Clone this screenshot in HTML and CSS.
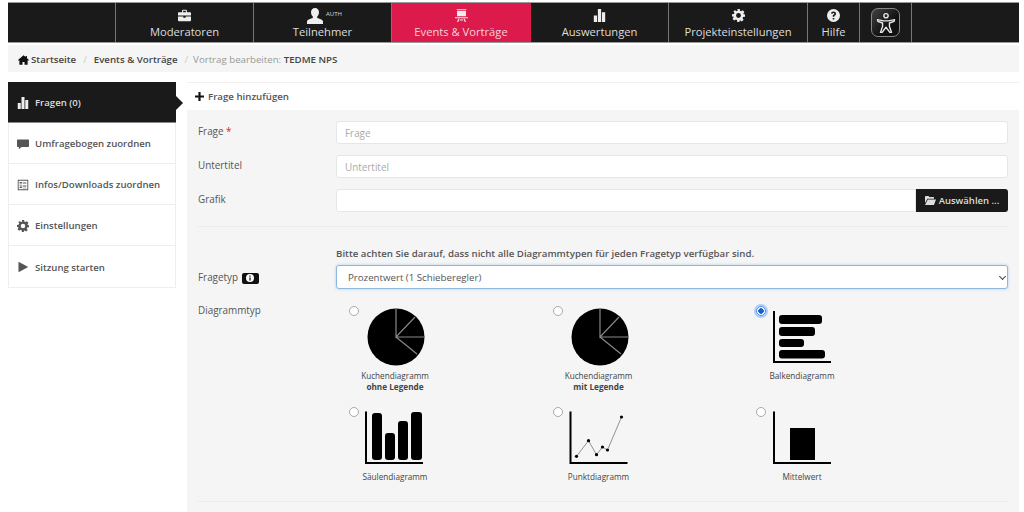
FILE: index.html
```html
<!DOCTYPE html>
<html lang="de">
<head>
    <meta charset="UTF-8">
    <title>Vortrag bearbeiten: TEDME NPS</title>
    <link rel="stylesheet" href="styles.css">
</head>
<body>
    <svg class="defs" width="0" height="0">
        <symbol id="i-bars" viewBox="0 0 16 16"><path d="M1 8h4v8H1zM6 0h4v16H6zM11 4h4v12h-4z"/></symbol>
        <symbol id="i-cog" viewBox="0 0 16 16"><path fill-rule="evenodd" d="M6.5 0h3l.4 2.2 1.4.6L13.200 1.500l2.100 2.100-1.300 1.900.6 1.400L16 6.500v3l-2.400.4-.6 1.400 1.300 1.900-2.100 2.100-1.900-1.300-1.400.6L9.500 16h-3l-.4-2.400-1.400-.6-1.900 1.300-2.100-2.100 1.300-1.900-.6-1.400L0 9.500v-3l2.400-.4.600-1.400L1.700 2.800 3.800 1.500l1.900 1.300 1.400-.6zM8 5a3 3 0 1 0 0 6 3 3 0 0 0 0-6z"/></symbol>
    </svg>

    <div class="topnav">
        <div class="nav-item nav-blank"></div>
        <a class="nav-item nav-w138">
            <svg class="nav-icon" viewBox="0 0 16 14"><path d="M5 3V1.500C5 .7 5.700 0 6.500 0h3C10.300 0 11 .7 11 1.500V3h4c.6 0 1 .4 1 1v3H0V4c0-.6.4-1 1-1zm1.300 0h3.400V1.300H6.300zM0 8.300h6.500v1.400h3V8.300H16V13c0 .6-.4 1-1 1H1c-.6 0-1-.4-1-1z"/></svg>
            <span>Moderatoren</span>
        </a>
        <a class="nav-item nav-w138">
            <div class="nav-user">
                <svg class="nav-icon nav-icon-lg" viewBox="0 0 16 16"><path d="M8 0c2.400 0 4 1.900 4 4.300 0 1.700-.8 3.300-1.800 4.300v1.500c2 .8 5.800 1.500 5.800 3.400V16H0v-2.500c0-1.900 3.800-2.600 5.800-3.400V8.600C4.800 7.600 4 6 4 4.300 4 1.900 5.600 0 8 0z"/></svg>
                <small>AUTH</small>
            </div>
            <span>Teilnehmer</span>
        </a>
        <a class="nav-item nav-w139 active">
            <svg class="nav-icon" viewBox="0 0 16 16"><path d="M2 0h12v1H2zM2.500 2h11v7h-11zM0 10h16v1.500H0zM4 12h1.500L4 16H2.500zM10.500 12H12l1.500 4H12zM6 13h4v1H6z"/></svg>
            <span>Events &amp; Vorträge</span>
        </a>
        <a class="nav-item nav-w138">
            <svg class="nav-icon" viewBox="0 0 16 16"><use href="#i-bars"/></svg>
            <span>Auswertungen</span>
        </a>
        <a class="nav-item nav-w139">
            <svg class="nav-icon" viewBox="0 0 16 16"><use href="#i-cog"/></svg>
            <span>Projekteinstellungen</span>
        </a>
        <a class="nav-item nav-w52">
            <svg class="nav-icon" viewBox="0 0 16 16"><path fill-rule="evenodd" d="M8 0a8 8 0 1 1 0 16A8 8 0 0 1 8 0zM7 11v2h2v-2zM8 3C6.200 3 5 4 4.900 5.600l1.900.3C6.900 5.200 7.300 4.800 8 4.800c.7 0 1.100.4 1.100.9 0 .5-.3.800-.9 1.200-.9.600-1.200 1.200-1.200 2.100v.5h2v-.3c0-.5.200-.7.800-1.100.9-.6 1.300-1.300 1.300-2.400C11.100 4 9.800 3 8 3z"/></svg>
            <span>Hilfe</span>
        </a>
        <div class="nav-item nav-w52">
            <div class="access-btn">
                <svg viewBox="0 0 28 28" width="24" height="24" fill="none" stroke="#e8e8e8" stroke-width="1.600" stroke-linejoin="round">
                    <circle cx="14" cy="5.500" r="2.500"/>
                    <path d="M4 10l7 1.500h6l7-1.500-.5 2-5.500 2v4l2.500 7h-2L14 19l-4.500 6h-2L10 18v-4l-5.500-2z"/>
                </svg>
            </div>
        </div>
        <div class="nav-item nav-rest"></div>
    </div>

    <div class="breadcrumb">
        <svg class="home-icon" viewBox="0 0 16 14"><path d="M8 0l3 2.600V1h2v3.400L16 7l-1 1.200-1-.8V14H9.500v-4h-3v4H2V7.400l-1 .8L0 7z"/></svg>
        <a class="crumb">Startseite</a>
        <span class="crumb-sep">/</span>
        <a class="crumb">Events &amp; Vorträge</a>
        <span class="crumb-sep">/</span>
        <span class="crumb-current">Vortrag bearbeiten: <b>TEDME NPS</b></span>
    </div>

    <div class="content">
        <div class="sidebar">
            <a class="side-item active">
                <svg class="side-icon" viewBox="0 0 16 16"><use href="#i-bars"/></svg>
                Fragen (0)
            </a>
            <a class="side-item">
                <svg class="side-icon" viewBox="0 0 16 16"><path d="M1 2h14c.6 0 1 .4 1 1v8c0 .6-.4 1-1 1H6l-3.500 3v-3H1c-.6 0-1-.4-1-1V3c0-.6.4-1 1-1z"/></svg>
                Umfragebogen zuordnen
            </a>
            <a class="side-item">
                <svg class="side-icon" viewBox="0 0 16 16"><path fill-rule="evenodd" d="M1 1h14v14H1zM2.200 2.200v11.600h11.600V2.200zM3.500 4h3v2h-3zM7.500 4h5v.8h-5zM7.500 6h5v.8h-5zM3.500 7.500h3v1h-3zM7.500 8h5v.8h-5zM3.500 10h3v2h-3zM7.500 10h5v.8h-5zM7.500 11.600h5v.8h-5z"/></svg>
                Infos/Downloads zuordnen
            </a>
            <a class="side-item">
                <svg class="side-icon" viewBox="0 0 16 16"><use href="#i-cog"/></svg>
                Einstellungen
            </a>
            <a class="side-item">
                <svg class="side-icon" viewBox="0 0 16 16"><path d="M2 1l13 7-13 7z"/></svg>
                Sitzung starten
            </a>
        </div>

        <div class="panel">
            <div class="panel-head">
                <svg class="plus-icon" viewBox="0 0 10 10"><path d="M3.800 0h2.400v3.800H10v2.400H6.200V10H3.800V6.200H0V3.800h3.800z"/></svg>
                Frage hinzufügen
            </div>
            <div class="panel-body">
                <div class="form-row">
                    <label class="form-label">Frage <i class="req">*</i></label>
                    <input class="form-input" type="text" placeholder="Frage">
                </div>
                <div class="form-row">
                    <label class="form-label">Untertitel</label>
                    <input class="form-input" type="text" placeholder="Untertitel">
                </div>
                <div class="form-row">
                    <label class="form-label">Grafik</label>
                    <div class="file-group">
                        <input class="form-input" type="text">
                        <button class="file-btn">
                            <svg class="folder-icon" viewBox="0 0 16 13"><path d="M1 0h4l1.500 1.500H13V4H3.500L0 10V1c0-.6.4-1 1-1zM4 5h12l-3 8H0z"/></svg>
                            Auswählen ...
                        </button>
                    </div>
                </div>
                <hr class="divider">
                <p class="hint">Bitte achten Sie darauf, dass nicht alle Diagrammtypen für jeden Fragetyp verfügbar sind.</p>
                <div class="form-row type-row">
                    <label class="form-label">Fragetyp
                        <span class="info-badge"><svg viewBox="0 0 10 10" width="8" height="8"><path fill-rule="evenodd" fill="#fff" d="M5 0a5 5 0 1 1 0 10A5 5 0 0 1 5 0zM4.200 2v1.500h1.600V2zM4.200 4.500V8h1.600V4.500z"/></svg></span>
                    </label>
                    <div class="select-wrap">
                        <select class="form-select">
                            <option>Prozentwert (1 Schieberegler)</option>
                        </select>
                    </div>
                </div>
                <div class="form-row chart-row">
                    <label class="form-label chart-label">Diagrammtyp</label>
                    <div class="chart-grid">
                        <label class="chart-opt">
                            <input type="radio" name="chart">
                            <div class="chart-fig">
                                <svg viewBox="0 0 68 58" width="68" height="58">
                                    <circle cx="35" cy="29" r="28.500"/>
                                    <path class="pie-cut" d="M35 .5V29l19-20M35 29h28.500M35 29l21 17"/>
                                </svg>
                                <div>Kuchendiagramm<br><b>ohne Legende</b></div>
                            </div>
                        </label>
                        <label class="chart-opt">
                            <input type="radio" name="chart">
                            <div class="chart-fig">
                                <svg viewBox="0 0 68 58" width="68" height="58">
                                    <circle cx="35" cy="29" r="28.500"/>
                                    <path class="pie-cut" d="M35 .5V29l19-20M35 29h28.500M35 29l21 17"/>
                                </svg>
                                <div>Kuchendiagramm<br><b>mit Legende</b></div>
                            </div>
                        </label>
                        <label class="chart-opt">
                            <input type="radio" name="chart" checked>
                            <div class="chart-fig">
                                <svg viewBox="0 0 68 58" width="68" height="58">
                                    <path class="axis" d="M6 3v51h57"/>
                                    <rect x="11" y="7" width="43" height="9" rx="3"/>
                                    <rect x="11" y="19" width="36" height="9" rx="3"/>
                                    <rect x="11" y="31" width="25" height="8" rx="3"/>
                                    <rect x="11" y="42" width="46" height="8.500" rx="3"/>
                                </svg>
                                <div>Balkendiagramm</div>
                            </div>
                        </label>
                        <label class="chart-opt">
                            <input type="radio" name="chart">
                            <div class="chart-fig">
                                <svg viewBox="0 0 68 58" width="68" height="58">
                                    <path class="axis" d="M5 2.500V54h57"/>
                                    <rect x="11" y="4" width="10" height="47" rx="3"/>
                                    <rect x="24" y="24" width="10" height="27" rx="3"/>
                                    <rect x="37" y="12" width="10" height="39" rx="3"/>
                                    <rect x="50" y="3" width="11" height="48" rx="3"/>
                                </svg>
                                <div>Säulendiagramm</div>
                            </div>
                        </label>
                        <label class="chart-opt">
                            <input type="radio" name="chart">
                            <div class="chart-fig">
                                <svg viewBox="0 0 68 58" width="68" height="58">
                                    <path class="axis" d="M5.500 2.500V54h57"/>
                                    <path class="dot-line" d="M11.500 47.300l12-15.600 8 14 6-7.700 5 3 14-33"/>
                                    <circle cx="11.500" cy="47.300" r="1.600"/>
                                    <circle cx="23.500" cy="31.700" r="1.600"/>
                                    <circle cx="31.500" cy="45.700" r="1.600"/>
                                    <circle cx="37.500" cy="38" r="1.600"/>
                                    <circle cx="42.500" cy="41" r="1.600"/>
                                    <circle cx="56.500" cy="8" r="1.600"/>
                                </svg>
                                <div>Punktdiagramm</div>
                            </div>
                        </label>
                        <label class="chart-opt">
                            <input type="radio" name="chart">
                            <div class="chart-fig">
                                <svg viewBox="0 0 68 58" width="68" height="58">
                                    <path class="axis" d="M6 2.500V54h57"/>
                                    <rect x="22" y="19" width="25" height="32"/>
                                </svg>
                                <div>Mittelwert</div>
                            </div>
                        </label>
                    </div>
                </div>
                <hr class="divider divider-end">
            </div>
        </div>
    </div>
</body>
</html>
```

FILE: styles.css
```css
* {
    margin: 0;
    padding: 0;
    box-sizing: border-box;
}

body {
    display: flex;
    flex-direction: column;
    font-family: "Open Sans", sans-serif;
    background: #fff;
    color: #555;
    height: 512px;
    overflow: hidden;
    padding: 2px 5px 0 8px;
}

.defs {
    position: absolute;
}

/* top navigation */
.topnav {
    display: flex;
    flex-shrink: 0;
    height: 41px;
    background: #1a1a1a;
    border-top: 1px solid #999;
    border-bottom: 1px solid #999;
}

.nav-item {
    display: flex;
    flex-direction: column;
    align-items: center;
    justify-content: flex-end;
    color: #ddd;
    font-size: 11.2px;
    line-height: 16px;
    border-right: 1px solid #777;
    padding-bottom: 2px;
}

.nav-blank { width: 108px; }
.nav-w138 { width: 138px; }
.nav-w139 { width: 139px; }
.nav-w52 { width: 52px; }
.nav-rest { flex: 1; border-right: none; }

.nav-item.active {
    background: #dc1a4b;
    border-right-color: #dc1a4b;
    color: #f3d5dc;
}

.nav-icon {
    width: 13px;
    height: 13px;
    fill: #eee;
    margin-bottom: 2px;
}

.nav-icon-lg {
    width: 16px;
    height: 16px;
    margin-bottom: 0;
}

.nav-user {
    display: flex;
    align-items: flex-start;
    gap: 3px;
    margin-left: 4px;
}

.nav-user small {
    font-size: 6px;
    line-height: 12px;
    color: #ddd;
}

.access-btn {
    display: flex;
    align-items: center;
    justify-content: center;
    width: 29px;
    height: 29px;
    margin-bottom: 3px;
    border: 1px solid #888;
    border-radius: 7px;
    background: linear-gradient(135deg, #444 0%, #111 60%);
}

/* breadcrumb */
.breadcrumb {
    display: flex;
    flex-shrink: 0;
    align-items: center;
    height: 27px;
    margin-top: 2px;
    padding: 2px 0 0 10px;
    background: #f5f5f5;
    font-size: 9.7px;
    font-weight: 600;
    color: #444;
}

.home-icon {
    width: 11px;
    height: 10px;
    fill: #111;
    margin-right: 2px;
}

.crumb-sep {
    color: #ccc;
    font-weight: 400;
    margin: 0 7px;
}

.crumb-current {
    margin-left: -2px;
    color: #999;
    font-weight: 400;
}

.crumb-current b {
    color: #444;
    font-weight: 600;
}

/* sidebar + panel */
.content {
    display: flex;
    flex: 1;
    min-height: 0;
    gap: 11px;
    margin-top: 10px;
}

.sidebar {
    width: 168px;
    flex-shrink: 0;
    align-self: flex-start;
    border: 1px solid #eee;
    border-top: none;
}

.side-item {
    position: relative;
    display: flex;
    align-items: center;
    gap: 6px;
    height: 41px;
    padding: 1px 0 0 8px;
    font-size: 9.6px;
    font-weight: 600;
    color: #555;
    border-bottom: 1px solid #eee;
}

.side-item:last-child {
    border-bottom: none;
}

.side-icon {
    width: 12px;
    height: 12px;
    fill: #555;
    flex-shrink: 0;
}

.side-item.active {
    background: #1a1a1a;
    color: #ddd;
    margin: 0 -1px;
    padding-left: 9px;
    border-bottom: 1px solid #888;
}

.side-item.active .side-icon {
    fill: #eee;
}

.side-item.active::after {
    content: "";
    position: absolute;
    left: 100%;
    top: 14px;
    border-left: 7px solid #1a1a1a;
    border-top: 7px solid transparent;
    border-bottom: 7px solid transparent;
}

.panel {
    display: flex;
    flex-direction: column;
    flex: 1;
    min-width: 0;
}

.panel-head {
    display: flex;
    flex-shrink: 0;
    align-items: center;
    gap: 4px;
    height: 28px;
    padding-left: 8px;
    background: #fff;
    border-top: 1px solid #f0f0f0;
    font-size: 9.7px;
    font-weight: 600;
    color: #555;
}

.plus-icon {
    width: 9px;
    height: 9px;
    fill: #111;
}

.panel-body {
    flex: 1;
    min-height: 0;
    background: #f5f5f5;
    padding: 11px 11px 0;
}

.form-row {
    display: flex;
    align-items: flex-start;
    margin-bottom: 11px;
}

.form-label {
    width: 138px;
    flex-shrink: 0;
    font-size: 9.9px;
    line-height: 20px;
    color: #555;
}

.chart-label {
    margin-top: -3px;
}

.req {
    color: #e02020;
    font-style: normal;
}

.form-input {
    flex: 1;
    min-width: 0;
    height: 23px;
    padding: 0 8px;
    background: #fff;
    border: 1px solid #e6e6e6;
    border-radius: 3px;
    font-family: inherit;
    font-size: 9.9px;
    color: #555;
    outline: none;
}

.form-input::placeholder {
    color: #aaa;
}

.file-group {
    display: flex;
    flex: 1;
}

.file-group .form-input {
    border-radius: 3px 0 0 3px;
}

.file-btn {
    display: flex;
    align-items: center;
    justify-content: center;
    gap: 3px;
    width: 92px;
    border: none;
    border-radius: 0 3px 3px 0;
    background: #1a1a1a;
    color: #ddd;
    font-family: inherit;
    font-size: 9.5px;
    font-weight: 600;
}

.folder-icon {
    width: 11px;
    height: 9px;
    fill: #ddd;
}

.divider {
    border: none;
    border-top: 1px solid #ececec;
    margin-top: 14px;
}

.hint {
    margin: 20px 0 5px 138px;
    font-size: 9.7px;
    line-height: 13px;
    font-weight: 600;
    color: #555;
}

.type-row {
    align-items: center;
    margin-bottom: 14px;
}

.info-badge {
    display: inline-flex;
    align-items: center;
    justify-content: center;
    width: 17px;
    height: 11px;
    margin-left: 1px;
    vertical-align: -1px;
    background: #111;
    border-radius: 2px;
}

.select-wrap {
    position: relative;
    flex: 1;
    min-width: 0;
}

.select-wrap::after {
    content: "";
    position: absolute;
    right: 3px;
    top: 9px;
    width: 4px;
    height: 4px;
    border-right: 1px solid #444;
    border-bottom: 1px solid #444;
    transform: rotate(45deg);
}

.form-select {
    display: block;
    width: 100%;
    height: 24px;
    padding-left: 11px;
    appearance: none;
    background: #fff;
    border: 1px solid #8db8e0;
    border-radius: 3px;
    box-shadow: 0 0 3px rgba(80, 150, 230, 0.45);
    font-family: inherit;
    font-size: 9.7px;
    color: #555;
    outline: none;
}

.chart-row {
    margin-bottom: -5px;
}

.chart-grid {
    display: grid;
    grid-template-columns: repeat(3, 203.5px);
    grid-auto-rows: 101px;
    margin-top: 1px;
}

.chart-opt {
    display: flex;
    align-items: flex-start;
    padding: 2px 0 0 13px;
}

.chart-opt input {
    appearance: none;
    width: 10px;
    height: 10px;
    margin: 0 2px 0 0;
    flex-shrink: 0;
    background: #fff;
    border: 1px solid #aaa;
    border-radius: 50%;
}

.chart-opt input:checked {
    background: radial-gradient(circle, #1a5fd0 0 2.5px, #fff 3px);
    border-color: #3d8bf0;
    box-shadow: 0 0 0 2px rgba(90, 160, 250, 0.45);
}

.chart-fig {
    width: 68px;
    margin-top: 2px;
    font-size: 8.2px;
    line-height: 11px;
    color: #444;
    text-align: center;
    white-space: nowrap;
    display: flex;
    flex-direction: column;
    align-items: center;
    gap: 4px;
}

.chart-fig b {
    font-weight: 700;
}

.chart-fig svg {
    display: block;
    fill: #000;
}

.pie-cut {
    fill: none;
    stroke: #888;
    stroke-width: 1.2;
}

.axis {
    fill: none;
    stroke: #000;
    stroke-width: 2;
}

.dot-line {
    fill: none;
    stroke: #777;
    stroke-width: 0.8;
}

.divider-end {
    margin-top: 0;
}
```
